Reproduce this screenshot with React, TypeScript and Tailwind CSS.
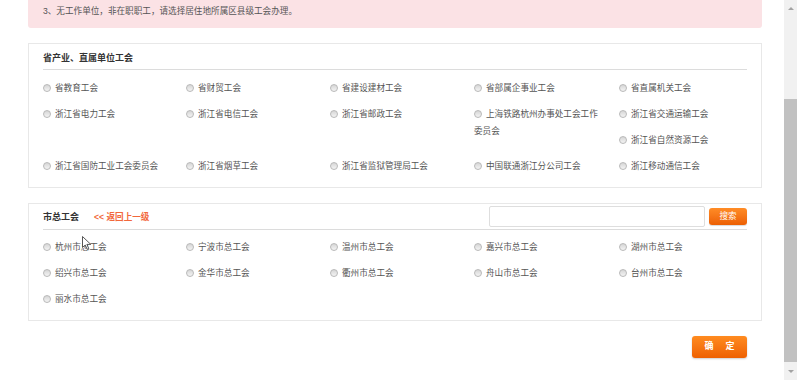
import React, { useState } from 'react';

interface Union {
  name: string;
  cls?: string;
}

const provinceUnions: Union[] = [
  { name: '省教育工会' },
  { name: '省财贸工会' },
  { name: '省建设建材工会' },
  { name: '省部属企事业工会' },
  { name: '省直属机关工会' },
  { name: '浙江省电力工会' },
  { name: '浙江省电信工会' },
  { name: '浙江省邮政工会' },
  { name: '上海铁路杭州办事处工会工作委员会', cls: 'row-span-2' },
  { name: '浙江省交通运输工会' },
  { name: '浙江省自然资源工会', cls: 'col-start-5' },
  { name: '浙江省国防工业工会委员会' },
  { name: '浙江省烟草工会' },
  { name: '浙江省监狱管理局工会' },
  { name: '中国联通浙江分公司工会' },
  { name: '浙江移动通信工会' },
];

const cityUnions: Union[] = [
  { name: '杭州市总工会' },
  { name: '宁波市总工会' },
  { name: '温州市总工会' },
  { name: '嘉兴市总工会' },
  { name: '湖州市总工会' },
  { name: '绍兴市总工会' },
  { name: '金华市总工会' },
  { name: '衢州市总工会' },
  { name: '舟山市总工会' },
  { name: '台州市总工会' },
  { name: '丽水市总工会' },
];

const RadioItem: React.FC<{ item: Union; checked: boolean; onPick: () => void }> = ({ item, checked, onPick }) => (
  <label onClick={onPick} className={`block w-[130px] pt-[5px] leading-[17px] cursor-pointer ${item.cls || ''}`}>
    <span className="inline-block w-[8px] h-[8px] mr-[4px] rounded-full border border-[#b9b9b9] bg-gradient-to-b from-[#d6d6d6] to-[#f4f4f4] align-[-0.5px] relative">
      {checked && <span className="absolute inset-[1.5px] rounded-full bg-[#555]" />}
    </span>
    {item.name}
  </label>
);

const App: React.FC = () => {
  const [picked, setPicked] = useState('');
  const [keyword, setKeyword] = useState('');

  return (
    <div className="flex h-[380px] overflow-hidden bg-white text-[8.6px] text-[#555] font-['Liberation_Sans','Noto_Sans_CJK_SC',sans-serif]">
      <div className="relative w-[784px] pl-[28px] pr-[22px]">
        {/* notice */}
        <div className="h-[28px] pt-[5px] px-[15px] leading-[12px] bg-[#fbe2e5] rounded-b-[3px]">
          3、无工作单位，非在职职工，请选择居住地所属区县级工会办理。
        </div>

        {/* provincial unions */}
        <div className="mt-[15px] border border-[#e8e8e8] px-[14px] pb-[8px]">
          <div className="pt-[8px] pb-[5px] leading-[12px] text-[9px] font-bold text-[#333] border-b border-[#dcdcdc]">
            省产业、直属单位工会
          </div>
          <div className="grid grid-cols-[143px_144px_144px_145px_1fr] auto-rows-[26px] pt-[5px]">
            {provinceUnions.map(u => (
              <RadioItem key={u.name} item={u} checked={picked === u.name} onPick={() => setPicked(u.name)} />
            ))}
          </div>
        </div>

        {/* city unions */}
        <div className="mt-[15px] border border-[#e8e8e8] px-[14px] pb-[8px]">
          <div className="flex items-center justify-between py-[2px] border-b border-[#dcdcdc]">
            <div className="flex items-center pt-[2px]">
              <span className="text-[9px] font-bold text-[#333]">市总工会</span>
              <span className="ml-[15px] text-[8.6px] font-bold text-[#f2683c] cursor-pointer">&lt;&lt; 返回上一级</span>
            </div>
            <div className="flex items-center gap-[4px]">
              <input
                value={keyword}
                onChange={e => setKeyword(e.target.value)}
                className="w-[216px] h-[21px] border border-[#dedede] rounded-[2px] px-[4px] outline-none text-[9px]"
              />
              <button className="w-[38px] h-[17px] rounded-[3px] bg-gradient-to-b from-[#ff8c26] to-[#ec5f02] text-white text-[8.6px] leading-[17px] shadow-[0_1px_1px_rgba(0,0,0,0.15)]">
                搜索
              </button>
            </div>
          </div>
          <div className="grid grid-cols-[143px_144px_144px_145px_1fr] auto-rows-[26px] pt-[4px]">
            {cityUnions.map(u => (
              <RadioItem key={u.name} item={u} checked={picked === u.name} onPick={() => setPicked(u.name)} />
            ))}
          </div>
        </div>

        <div className="flex justify-end pr-[15px] mt-[15px]">
          <button className="w-[55px] h-[22px] rounded-[3px] bg-gradient-to-b from-[#ff8b1f] to-[#ee6000] text-white font-bold text-[9px] tracking-[12px] pl-[12px] shadow-[0_1px_2px_rgba(0,0,0,0.2)]">
            确定
          </button>
        </div>

        {/* mouse pointer */}
        <svg className="absolute left-[82px] top-[236px]" width="10" height="14" viewBox="0 0 10 14">
          <path d="M0.5 0.5 L0.5 11.5 L3.2 9 L5.2 13.3 L6.8 12.6 L4.9 8.4 L8.8 8.4 Z" fill="#fff" stroke="#444" strokeWidth="0.9" strokeLinejoin="round" />
        </svg>
      </div>

      {/* scrollbar */}
      <div className="w-[13px] h-full bg-[#f1f1f1] flex flex-col items-center">
        <div className="h-[17px] flex items-center justify-center">
          <span className="block w-0 h-0 border-l-[3px] border-r-[3px] border-b-[3px] border-l-transparent border-r-transparent border-b-[#a3a3a3]" />
        </div>
        <div className="h-[82px]" />
        <div className="w-full h-[263px] bg-[#c1c1c1]" />
        <div className="flex-1 flex items-center justify-center">
          <span className="block w-0 h-0 border-l-[3px] border-r-[3px] border-t-[3px] border-l-transparent border-r-transparent border-t-[#a3a3a3]" />
        </div>
      </div>
      <div className="w-[4px]" />
    </div>
  );
};

export default App;
